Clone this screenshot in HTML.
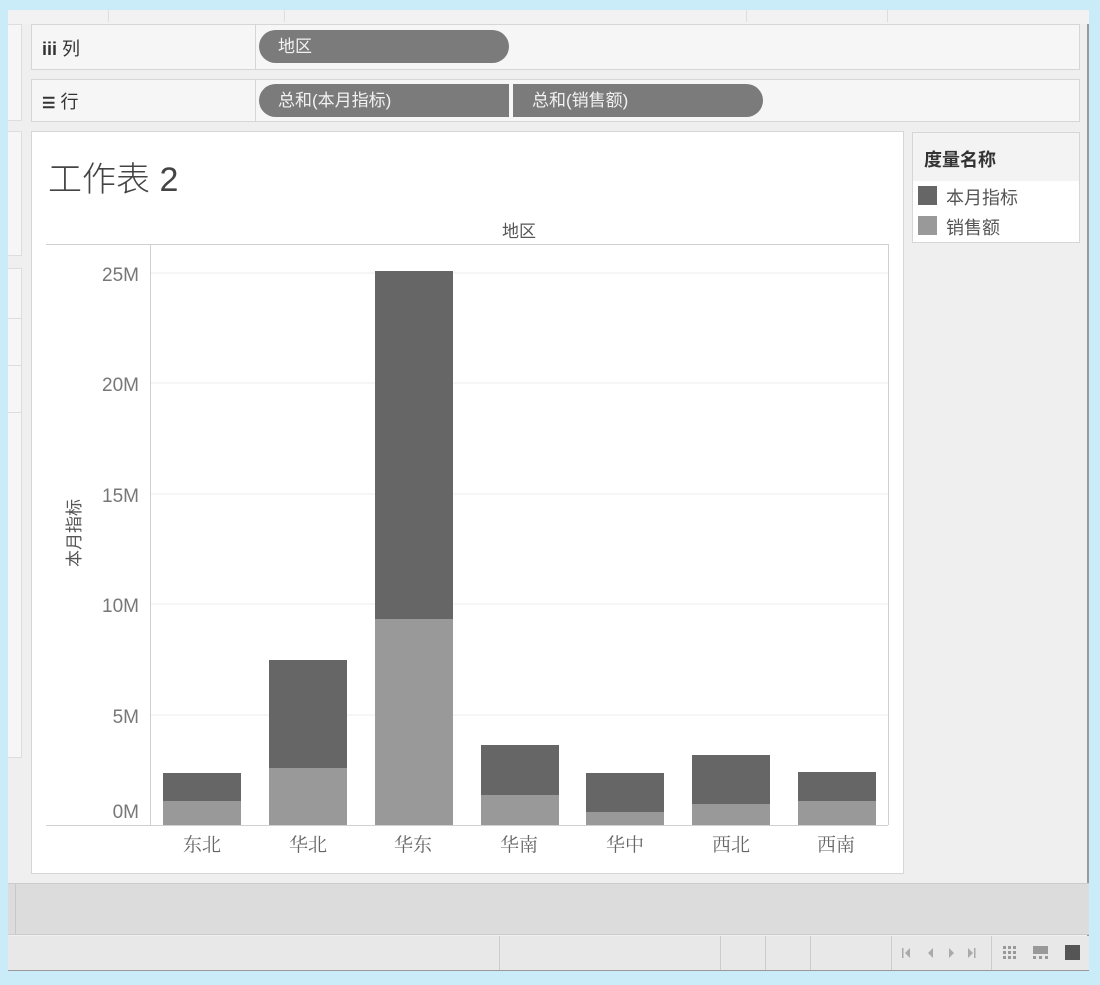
<!DOCTYPE html>
<html><head><meta charset="utf-8"><style>
*{margin:0;padding:0;box-sizing:border-box}
body{width:1100px;height:985px;background:#c9ecf8;position:relative;overflow:hidden;font-family:"Liberation Sans","Noto Sans CJK SC",sans-serif}
.a{position:absolute}
.pill{position:absolute;background:#7b7b7b;color:#f2f2f2;font-size:17px;line-height:33px;padding-left:19px}
</style></head><body>
<div class="a" style="left:8px;top:10px;width:1081px;height:961px;background:#efefef;border-right:2px solid #999;border-bottom:2px solid #999"></div>
<div class="a" style="left:8px;top:10px;width:1081px;height:14px;background:#f2f2f2"></div>
<div class="a" style="left:108px;top:10px;width:1px;height:12px;background:#ddd"></div>
<div class="a" style="left:284px;top:10px;width:1px;height:12px;background:#ddd"></div>
<div class="a" style="left:746px;top:10px;width:1px;height:12px;background:#ddd"></div>
<div class="a" style="left:887px;top:10px;width:1px;height:12px;background:#ddd"></div>
<!-- left partial panels -->
<div class="a" style="left:8px;top:24px;width:14px;height:97px;background:#f6f6f6;border:1px solid #ddd;border-left:none"></div>
<div class="a" style="left:8px;top:131px;width:14px;height:125px;background:#f6f6f6;border:1px solid #ddd;border-left:none"></div>
<div class="a" style="left:8px;top:268px;width:14px;height:490px;background:#f6f6f6;border:1px solid #ddd;border-left:none"></div>
<div class="a" style="left:8px;top:318px;width:14px;height:1px;background:#ddd"></div>
<div class="a" style="left:8px;top:365px;width:14px;height:1px;background:#ddd"></div>
<div class="a" style="left:8px;top:412px;width:14px;height:1px;background:#ddd"></div>
<!-- shelves -->
<div class="a" style="left:31px;top:24px;width:1049px;height:46px;background:#f6f6f6;border:1px solid #d6d6d6"></div>
<div class="a" style="left:255px;top:25px;width:1px;height:44px;background:#d6d6d6"></div>
<div class="a" style="left:42px;top:35px;font-size:18px;color:#333;font-weight:bold">iii <span style="font-weight:normal">列</span></div>
<div class="pill" style="left:259px;top:30px;width:250px;border-radius:17px">地区</div>
<div class="a" style="left:31px;top:79px;width:1049px;height:43px;background:#f6f6f6;border:1px solid #d6d6d6"></div>
<div class="a" style="left:255px;top:80px;width:1px;height:41px;background:#d6d6d6"></div>
<div class="a" style="left:42px;top:88px;font-size:18px;color:#333"><span style="font-size:15px;font-weight:bold">☰</span> 行</div>
<div class="pill" style="left:259px;top:84px;width:250px;border-radius:17px 0 0 17px">总和(本月指标)</div>
<div class="pill" style="left:513px;top:84px;width:250px;border-radius:0 17px 17px 0">总和(销售额)</div>
<!-- chart panel -->
<div class="a" style="left:31px;top:131px;width:873px;height:743px;background:#fff;border:1px solid #d6d6d6"></div>
<div class="a" style="left:48px;top:152px;font-size:34px;color:#444;font-weight:300">工作表 2</div>
<svg class="a" style="left:0;top:0" width="1100" height="985">
<g font-family="Liberation Sans" font-size="19" fill="#777" text-anchor="end">
<text x="139" y="281">25M</text><text x="139" y="391">20M</text><text x="139" y="502">15M</text><text x="139" y="612">10M</text><text x="139" y="723">5M</text><text x="139" y="818">0M</text>
</g>
<g stroke="#ececec"><line x1="150" y1="273" x2="888" y2="273"/><line x1="150" y1="383" x2="888" y2="383"/><line x1="150" y1="494" x2="888" y2="494"/><line x1="150" y1="604" x2="888" y2="604"/><line x1="150" y1="715" x2="888" y2="715"/></g>
<g stroke="#d0d0d0" fill="none"><line x1="46" y1="244.5" x2="888" y2="244.5"/><line x1="150.5" y1="244" x2="150.5" y2="825"/><line x1="888.5" y1="244" x2="888.5" y2="825"/><line x1="46" y1="825.5" x2="888" y2="825.5"/></g>
<g fill="#666">
<rect x="163" y="773" width="78" height="52"/><rect x="269" y="660" width="78" height="165"/><rect x="375" y="271" width="78" height="554"/><rect x="481" y="745" width="78" height="80"/><rect x="586" y="773" width="78" height="52"/><rect x="692" y="755" width="78" height="70"/><rect x="798" y="772" width="78" height="53"/>
</g>
<g fill="#999">
<rect x="163" y="801" width="78" height="24"/><rect x="269" y="768" width="78" height="57"/><rect x="375" y="619" width="78" height="206"/><rect x="481" y="795" width="78" height="30"/><rect x="586" y="812" width="78" height="13"/><rect x="692" y="804" width="78" height="21"/><rect x="798" y="801" width="78" height="24"/>
</g>
<g font-family="Liberation Serif,Noto Serif CJK SC,serif" font-size="19" fill="#666" text-anchor="middle">
<text x="202" y="851">东北</text><text x="308" y="851">华北</text><text x="413" y="851">华东</text><text x="519" y="851">华南</text><text x="625" y="851">华中</text><text x="731" y="851">西北</text><text x="836" y="851">西南</text>
</g>
<text x="519" y="237" font-family="Liberation Sans,Noto Sans CJK SC,sans-serif" font-size="17" fill="#555" text-anchor="middle">地区</text>
<text transform="translate(80,533) rotate(-90)" font-family="Liberation Sans,Noto Sans CJK SC,sans-serif" font-size="17" fill="#555" text-anchor="middle">本月指标</text>
</svg>
<!-- legend -->
<div class="a" style="left:912px;top:132px;width:168px;height:111px;background:#fff;border:1px solid #d6d6d6"></div>
<div class="a" style="left:913px;top:133px;width:166px;height:48px;background:#f3f3f3"></div>
<div class="a" style="left:924px;top:146px;font-size:18px;color:#333;font-weight:bold">度量名称</div>
<div class="a" style="left:918px;top:186px;width:19px;height:19px;background:#666"></div>
<div class="a" style="left:946px;top:184px;font-size:18px;color:#555">本月指标</div>
<div class="a" style="left:918px;top:216px;width:19px;height:19px;background:#999"></div>
<div class="a" style="left:946px;top:214px;font-size:18px;color:#555">销售额</div>
<!-- bottom -->
<div class="a" style="left:8px;top:883px;width:1081px;height:52px;background:#dcdcdc;border-top:1px solid #ccc;border-bottom:1px solid #ccc"></div>
<div class="a" style="left:15px;top:884px;width:1px;height:50px;background:#c8c8c8"></div>
<div class="a" style="left:8px;top:936px;width:1081px;height:34px;background:#e8e8e8"></div>
<div class="a" style="left:499px;top:936px;width:1px;height:34px;background:#ccc"></div>
<div class="a" style="left:720px;top:936px;width:1px;height:34px;background:#ccc"></div>
<div class="a" style="left:765px;top:936px;width:1px;height:34px;background:#ccc"></div>
<div class="a" style="left:810px;top:936px;width:1px;height:34px;background:#ccc"></div>
<div class="a" style="left:891px;top:936px;width:1px;height:34px;background:#ccc"></div>
<div class="a" style="left:991px;top:936px;width:1px;height:34px;background:#ccc"></div>
<svg class="a" style="left:895px;top:940px" width="195" height="28">
<g fill="#aaa"><rect x="7" y="8" width="1.5" height="10"/><path d="M15 8v10l-5-5z"/><path d="M38 8v10l-5-5z"/><path d="M54 8v10l5-5z"/><path d="M73 8v10l5-5z"/><rect x="79" y="8" width="1.5" height="10"/></g>
<g fill="#999"><rect x="108" y="6" width="3" height="3"/><rect x="113" y="6" width="3" height="3"/><rect x="118" y="6" width="3" height="3"/><rect x="108" y="11" width="3" height="3"/><rect x="113" y="11" width="3" height="3"/><rect x="118" y="11" width="3" height="3"/><rect x="108" y="16" width="3" height="3"/><rect x="113" y="16" width="3" height="3"/><rect x="118" y="16" width="3" height="3"/>
<rect x="138" y="6" width="15" height="8"/><rect x="138" y="16" width="3" height="3"/><rect x="144" y="16" width="3" height="3"/><rect x="150" y="16" width="3" height="3"/></g>
<rect x="170" y="5" width="15" height="15" fill="#555"/>
</svg>
</body></html>
